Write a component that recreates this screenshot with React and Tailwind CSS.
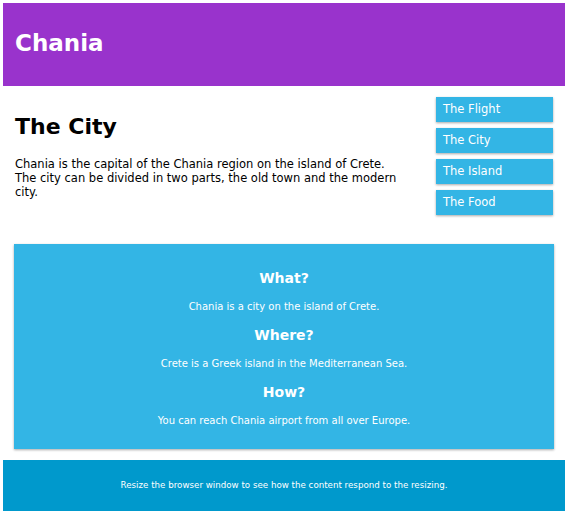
const menuItems = ["The Flight", "The City", "The Island", "The Food"];

const App = () => {
  return (
    <div className="min-h-[515px] bg-white pt-[3px] pl-[3px] pr-[5px] font-['DejaVu_Sans',sans-serif]">
      <div className="h-[83px] bg-[#9933cc] text-white flex items-center px-[12px]">
        <h1 className="text-[23px] font-bold leading-none -mt-[2px]">Chania</h1>
      </div>

      <div className="flex pt-[11px] pl-[12px] pr-[12px]">
        <div className="flex-1 pr-[20px]">
          <h1 className="text-[22px] font-bold leading-none mt-[19px] text-black">The City</h1>
          <p className="max-w-[388px] text-[11.5px] leading-[14px] mt-[19px] text-black">
            Chania is the capital of the Chania region on the island of Crete. The city can be divided in two parts, the old town and the modern city.
          </p>
        </div>
        <ul className="w-[117px] flex flex-col gap-[6px]">
          {menuItems.map((item) => (
            <li
              key={item}
              className="h-[25px] bg-[#33b5e5] text-white text-[11.5px] flex items-center px-[7px] shadow-[0_1px_3px_rgba(0,0,0,0.12),0_1px_2px_rgba(0,0,0,0.24)]"
            >
              {item}
            </li>
          ))}
        </ul>
      </div>

      <div className="mt-[29px] mx-[11px] h-[205px] bg-[#33b5e5] text-white text-center flex flex-col items-center pt-[24px] shadow-[0_1px_3px_rgba(0,0,0,0.12),0_1px_2px_rgba(0,0,0,0.24)]">
        <h2 className="text-[14px] font-bold leading-[20px]">What?</h2>
        <p className="text-[10px] leading-[14px] mt-[12px]">Chania is a city on the island of Crete.</p>
        <h2 className="text-[14px] font-bold leading-[20px] mt-[11px]">Where?</h2>
        <p className="text-[10px] leading-[14px] mt-[12px]">Crete is a Greek island in the Mediterranean Sea.</p>
        <h2 className="text-[14px] font-bold leading-[20px] mt-[11px]">How?</h2>
        <p className="text-[10px] leading-[14px] mt-[12px]">You can reach Chania airport from all over Europe.</p>
      </div>

      <div className="mt-[11px] h-[51px] bg-[#0099cc] text-white text-center flex items-center justify-center">
        <p className="text-[8.7px]">Resize the browser window to see how the content respond to the resizing.</p>
      </div>
    </div>
  );
};

export default App;
